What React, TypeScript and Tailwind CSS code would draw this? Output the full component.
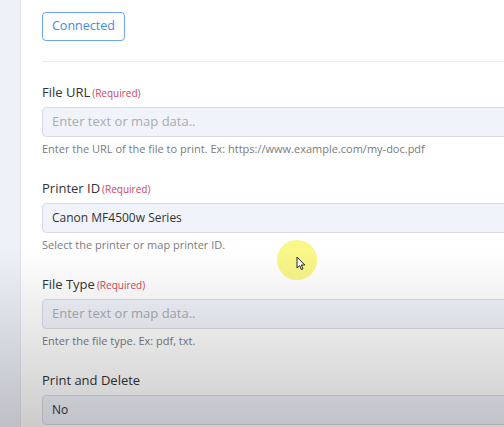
type Field = {
  label: string;
  required?: boolean;
  value?: string;
  placeholder?: string;
  help?: string;
};

const fields: Field[] = [
  {
    label: 'File URL',
    required: true,
    placeholder: 'Enter text or map data..',
    help: 'Enter the URL of the file to print. Ex: https://www.example.com/my-doc.pdf',
  },
  {
    label: 'Printer ID',
    required: true,
    value: 'Canon MF4500w Series',
    help: 'Select the printer or map printer ID.',
  },
  {
    label: 'File Type',
    required: true,
    placeholder: 'Enter text or map data..',
    help: 'Enter the file type. Ex: pdf, txt.',
  },
  {
    label: 'Print and Delete',
    value: 'No',
  },
];

function FormField({ field }: { field: Field }) {
  return (
    <div className="flex flex-col">
      <div className="flex items-baseline gap-[2px] h-[20px]">
        <span className="text-[13px] text-[#333]">{field.label}</span>
        {field.required && <span className="text-[10px] text-[#d0455c]">(Required)</span>}
      </div>
      <div className="mt-[4px] h-[30px] w-[480px] rounded-[4px] border border-[#d9dbe2] bg-[#f1f3fb] px-[9px] flex items-center">
        {field.value ? (
          <span className="text-[12px] text-[#333]">{field.value}</span>
        ) : (
          <span className="text-[13px] text-[#ababb0]">{field.placeholder}</span>
        )}
      </div>
      <div className="h-[42px] pt-[4px]">
        {field.help && <p className="text-[11px] leading-[16px] text-[#7a7a80]">{field.help}</p>}
      </div>
    </div>
  );
}

// plain arrow pointer
function Cursor({ className }: { className?: string }) {
  return (
    <svg className={className} width="10" height="15" viewBox="0 0 10 15">
      <path
        d="M1 1 L1 12 L3.6 9.6 L5.4 13.6 L7 12.9 L5.3 9 L8.8 9 Z"
        fill="#fff"
        stroke="#222"
        strokeWidth="1"
        strokeLinejoin="round"
      />
    </svg>
  );
}

export default function App() {
  return (
    <div
      className="relative w-[504px] h-[427px] overflow-hidden flex bg-white"
      style={{ fontFamily: '"Open Sans", sans-serif' }}
    >
      <div className="w-[21px] shrink-0 bg-[#eef0f8] border-r border-[#e3e5ee]" />

      <div className="flex-1 pl-[21px] pt-[12px]">
        <button className="h-[29px] px-[9px] rounded-[4px] border border-[#6aa6ea] text-[12.5px] text-[#3a8de6] bg-white">
          Connected
        </button>
        <div className="mt-[20px] h-px w-[480px] bg-[#e6eef8]" />
        <div className="mt-[21px] flex flex-col">
          {fields.map((f) => (
            <FormField key={f.label} field={f} />
          ))}
        </div>
      </div>

      {/* cursor highlight */}
      <div className="absolute left-[277px] top-[240px] w-[40px] h-[40px] rounded-full bg-[#f7f56a]/80 blur-[0.5px]" />
      <Cursor className="absolute left-[296px] top-[256px]" />

      {/* fade toward the bottom edge */}
      <div className="pointer-events-none absolute inset-x-0 top-[250px] bottom-0 bg-gradient-to-b from-black/0 to-black/[0.2]" />
    </div>
  );
}
